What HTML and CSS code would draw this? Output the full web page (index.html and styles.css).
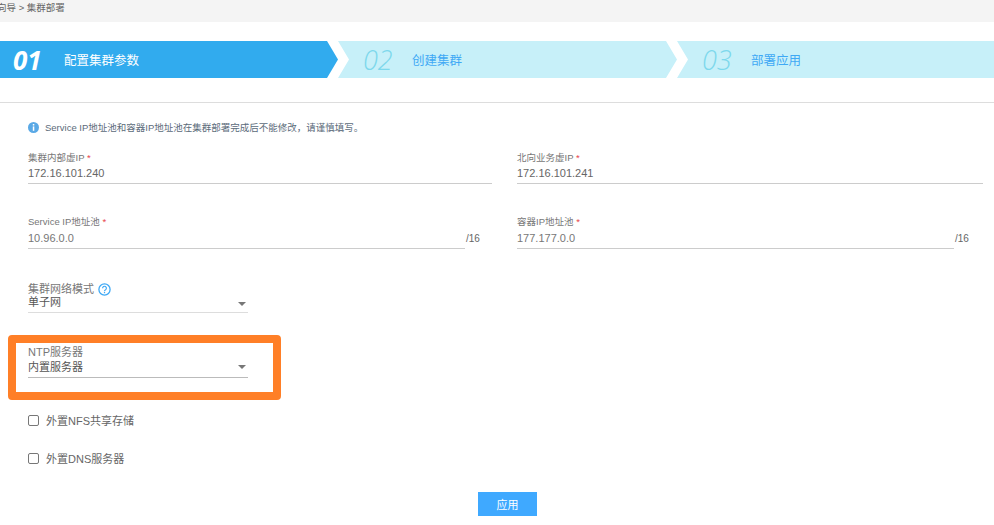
FILE: index.html
```html
<!DOCTYPE html>
<html>

<head>
    <meta charset="utf-8">
    <title>集群部署</title>
    <link rel="stylesheet" href="styles.css">
</head>

<body>
    <div class="crumb"><span>向导 &gt; 集群部署</span></div>

    <div class="steps">
        <div class="step step-first active"><b>01</b><span>配置集群参数</span></div>
        <div class="step step-second"><b>02</b><span>创建集群</span></div>
        <div class="step step-third"><b>03</b><span>部署应用</span></div>
    </div>

    <div class="form">
        <p class="tip">
            <svg width="11" height="11" viewBox="0 0 11 11">
                <circle cx="5.5" cy="5.5" r="5.5" fill="#5aa9e6" />
                <rect x="4.8" y="2" width="1.5" height="1.5" fill="#fff" />
                <rect x="4.8" y="4.4" width="1.5" height="4.4" fill="#fff" />
            </svg>
            Service IP地址池和容器IP地址池在集群部署完成后不能修改，请谨慎填写。
        </p>

        <div class="row row-ip">
            <div class="field">
                <label>集群内部虚IP <i>*</i></label>
                <div class="value">172.16.101.240</div>
            </div>
            <div class="field">
                <label>北向业务虚IP <i>*</i></label>
                <div class="value">172.16.101.241</div>
            </div>
        </div>

        <div class="row row-pool">
            <div class="field">
                <label>Service IP地址池 <i>*</i></label>
                <div class="with-mask">
                    <div class="value">10.96.0.0</div><em>/16</em>
                </div>
            </div>
            <div class="field">
                <label>容器IP地址池 <i>*</i></label>
                <div class="with-mask">
                    <div class="value">177.177.0.0</div><em>/16</em>
                </div>
            </div>
        </div>

        <div class="field field-select field-mode">
            <label>集群网络模式
                <svg width="13" height="13" viewBox="0 0 13 13">
                    <circle cx="6.5" cy="6.5" r="5.6" fill="none" stroke="#3fa9f5" stroke-width="1.3" />
                    <path d="M4.6 5.2a1.9 1.9 0 1 1 2.9 1.6c-.7.4-1 .8-1 1.5" fill="none" stroke="#3fa9f5" stroke-width="1.2" />
                    <rect x="5.9" y="9" width="1.2" height="1.2" fill="#3fa9f5" />
                </svg>
            </label>
            <div class="value">单子网<span class="caret"></span></div>
        </div>

        <div class="mark">
            <div class="field field-select">
                <label>NTP服务器</label>
                <div class="value">内置服务器<span class="caret"></span></div>
            </div>
        </div>

        <div class="check check-nfs"><span class="box"></span>外置NFS共享存储</div>
        <div class="check check-dns"><span class="box"></span>外置DNS服务器</div>

        <div class="actions"><button class="button">应用</button></div>
    </div>
</body>

</html>
```

FILE: styles.css
```css
* {
    margin: 0;
    padding: 0;
    box-sizing: border-box;
}

body {
    font-family: "Liberation Sans", "Noto Sans CJK SC", sans-serif;
    font-size: 11px;
    color: #666;
    background: #fff;
    overflow: hidden;
}

.crumb {
    height: 22px;
    line-height: 15px;
    background: #f4f4f4;
    font-size: 9.5px;
    color: #666;
    overflow: hidden;
}

.crumb span {
    margin-left: -3px;
}

/* steps */
.steps {
    display: flex;
    height: 37px;
    margin-top: 19px;
}

.step {
    display: flex;
    align-items: center;
    background: #c7f0f9;
    color: #3fa9f5;
    font-size: 12.5px;
}

.step b {
    width: 49px;
    font-family: "Open Sans", sans-serif;
    font-size: 27px;
    font-style: italic;
    font-weight: 300;
    color: #7dd8ec;
}

.step-first {
    width: 338px;
    padding-left: 13px;
    clip-path: polygon(0 0, 327px 0, 338px 50%, 327px 100%, 0 100%);
}

.step-second {
    width: 339px;
    padding-left: 25px;
    clip-path: polygon(0 0, 328px 0, 339px 50%, 328px 100%, 0 100%, 11px 50%);
}

.step-third {
    flex: 1;
    padding-left: 25px;
    clip-path: polygon(0 0, 100% 0, 100% 100%, 0 100%, 11px 50%);
}

.active {
    background: #31abee;
    color: #fff;
}

.active b {
    width: 51px;
    font-size: 26px;
    font-weight: 700;
    color: #fff;
}

/* form */
.form {
    margin-top: 24px;
    padding: 17px 11px 0 28px;
    border-top: 1px solid #ddd;
}

.tip {
    display: flex;
    align-items: center;
    gap: 6px;
    height: 14px;
    font-size: 9.5px;
    color: #5b6b7a;
}

.row {
    display: grid;
    grid-template-columns: 464px 466px;
    gap: 25px;
}

.row-ip {
    margin-top: 17px;
}

.row-pool {
    margin-top: 31px;
}

.field label {
    display: block;
    height: 14px;
    line-height: 14px;
    font-size: 9.5px;
    color: #777;
}

.field i {
    font-style: normal;
    color: #e8474c;
}

.value {
    height: 19px;
    line-height: 16px;
    border-bottom: 1px solid #ccc;
    font-size: 11px;
    color: #666;
}

.with-mask {
    display: flex;
    margin-top: 1px;
}

.with-mask .value {
    flex: 1;
    color: #777;
}

.with-mask em {
    width: 27px;
    padding: 1px 0 0 1px;
    line-height: 16px;
    font-style: normal;
    font-size: 10px;
}

.field + .field em {
    width: 29px;
}

.field-select {
    width: 220px;
}

.field-select label {
    font-size: 11px;
}

.field-select label svg {
    vertical-align: -3px;
    margin-left: 1px;
}

.field-select .value {
    position: relative;
    height: 17px;
    line-height: 12px;
    color: #555;
    border-bottom-color: #ddd;
}

.field-mode {
    margin-top: 33px;
}

.caret {
    position: absolute;
    right: 2px;
    top: 6px;
    border: 4.5px solid transparent;
    border-top-color: #777;
    border-bottom: 0;
}

.mark {
    width: 273px;
    height: 65px;
    margin: 22px 0 0 -20px;
    padding: 2px 0 0 12px;
    border: 8px solid #ff7f27;
    border-radius: 4px;
}

.mark .value {
    height: 19px;
    line-height: 16px;
    border-bottom-color: #bbb;
}

.check {
    display: flex;
    align-items: center;
    gap: 7px;
    height: 14px;
    font-size: 11px;
    color: #666;
}

.check-nfs {
    margin-top: 13px;
}

.check-dns {
    margin-top: 24px;
}

.box {
    width: 11px;
    height: 11px;
    border: 1px solid #777;
    border-radius: 2px;
}

.actions {
    margin: 27px 0 0 450px;
}

.button {
    width: 59px;
    height: 24px;
    border: none;
    background: #3fa9ff;
    color: #fff;
    font-family: inherit;
    font-size: 11px;
}
```
